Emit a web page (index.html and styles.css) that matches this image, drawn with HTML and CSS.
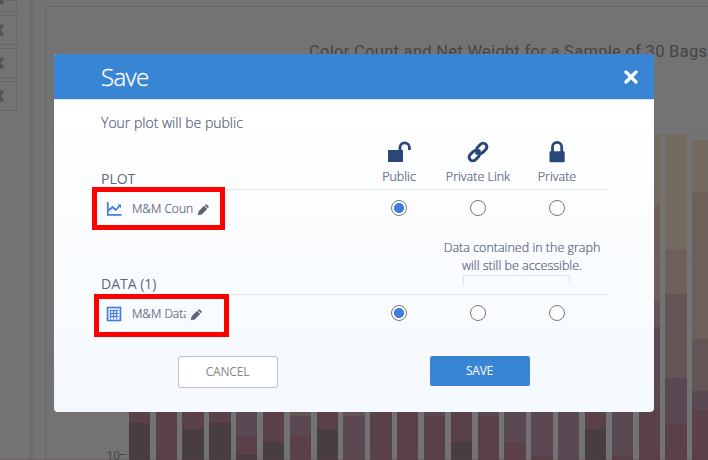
FILE: index.html
```html
<!DOCTYPE html>
<html lang="en">
<head>
<meta charset="utf-8">
<title>Save</title>
<link rel="stylesheet" href="styles.css">
</head>
<body>
<div class="workspace">
  <aside class="rail">
    <div class="rail-item"><svg viewBox="0 0 12 12"><path d="M1 1l10 10m0-10l-10 10"/></svg></div>
    <div class="rail-item"><svg viewBox="0 0 12 12"><path d="M1 1l10 10m0-10l-10 10"/></svg></div>
    <div class="rail-item"><svg viewBox="0 0 12 12"><path d="M1 1l10 10m0-10l-10 10"/></svg></div>
    <div class="rail-item"><svg viewBox="0 0 12 12"><path d="M1 1l10 10m0-10l-10 10"/></svg></div>
  </aside>
  <main class="plot">
    <svg class="chart" viewBox="0 0 708 460" shape-rendering="crispEdges">
      <path class="grid" d="M125 134.500H708M125 198.500H708M125 262.500H708M125 326.500H708M125 390.500H708M125 454.500H708"/>
      <g class="maroon">
        <path d="M129 400h21v60h-21zM156 400h21v60h-21zM182 400h22v60h-22zM209 400h22v60h-22zM236 400h21v60h-21zM263 400h21v60h-21zM290 400h21v60h-21zM370 400h22v60h-22zM397 400h21v60h-21zM424 400h21v60h-21zM451 400h21v60h-21zM317 400h21v60h-21zM478 400h21v60h-21zM504 400h22v60h-22zM531 400h22v60h-22zM585 400h21v60h-21zM612 400h21v60h-21zM639 410h21v50h-21zM665 423h22v37h-22zM692 410h16v50h-16z"/>
      </g>
      <path class="dark" d="M129 423h21v37h-21zM182 429h22v31h-22zM209 423h22v37h-22zM236 455h21v5h-21zM263 442h21v18h-21zM317 429h21v31h-21zM451 442h21v18h-21zM585 429h21v31h-21z"/>
      <path class="purple" d="M236 400h21v36h-21zM290 416h21v20h-21zM343 416h22v44h-22zM424 400h21v16h-21zM478 400h21v16h-21zM504 400h22v42h-22zM531 400h22v55h-22zM558 400h21v60h-21zM612 400h21v55h-21zM639 327h21v83h-21zM665 378h22v45h-22zM692 391h16v19h-16z"/>
      <path class="brown" d="M290 400h21v16h-21zM343 400h22v16h-22zM639 301h21v26h-21zM665 294h22v84h-22zM692 339h16v52h-16z"/>
      <path class="clay" d="M639 205h21v96h-21zM665 250h22v44h-22zM692 192h16v147h-16z"/>
      <path class="tan" d="M639 134h21v71h-21zM665 134h22v116h-22zM692 140h16v52h-16z"/>
      <path class="tick" d="M120 454.500h5"/>
      <path class="edge" d="M0 459.500H708"/>
      <text class="axis" x="106.500" y="460">10</text>
      <text class="title" x="309" y="57" textLength="398">Color Count and Net Weight for a Sample of 30 Bags</text>
    </svg>
  </main>
</div>

<section class="modal" role="dialog">
  <header class="modal-head">
    <h1>Save</h1>
    <svg class="close" viewBox="0 0 14 14"><path d="M2 2l10 10M12 2L2 12"/></svg>
  </header>
  <div class="modal-body">
    <p class="intro"><span>Your plot will be public</span></p>
    <div class="row heading">
      <h2><span>PLOT</span></h2>
      <div class="option">
        <svg class="icon" viewBox="0 0 24 22"><path class="fill" d="M1 9h15v12H1z"/><path class="shackle" d="M13 9V6.500a4.700 4.700 0 0 1 9.400 0V9"/></svg>
        <span>Public</span>
      </div>
      <div class="option">
        <svg class="icon" viewBox="0 0 24 22"><g class="chain" transform="translate(12 11) rotate(-45)"><rect x="-11" y="-3.700" width="11.600" height="7.400" rx="3.700"/><rect x="-.6" y="-3.700" width="11.600" height="7.400" rx="3.700"/><path d="M-3 0h6"/></g></svg>
        <span>Private Link</span>
      </div>
      <div class="option">
        <svg class="icon" viewBox="0 0 24 22"><rect class="fill" x="4.500" y="10.300" width="15.200" height="11" rx="1"/><path class="shackle" d="M7.500 11V6a4.600 4.600 0 0 1 9.200 0v5"/></svg>
        <span>Private</span>
      </div>
    </div>
    <div class="row choices">
      <div class="file">
        <svg class="kind" viewBox="0 0 16 16"><path class="line" d="M1.800 1v12.800H15.500"/><path class="line" d="M2.500 9.500L6.500 6l3.300 3L14 4.300"/><path class="tip" d="M11.300 3.500H15v3.700z"/></svg>
        <span class="name">M&amp;M Coun</span>
        <svg class="pencil" viewBox="0 0 12 12"><path d="M.8 11.200l.8-3.900L7.100 1.800l3.100 3.100-5.500 5.500zM7.700 1.200l.9-.7q.6-.4 1.100 0l1.800 1.800q.5.600 0 1.200l-.8.800z"/></svg>
      </div>
      <i class="radio on"></i><i class="radio"></i><i class="radio"></i>
    </div>
    <div class="row data-heading">
      <h2><span>DATA (1)</span></h2>
      <div class="note">
        <span>Data contained in the graph</span>
        <span>will still be accessible.</span>
        <div class="bracket"></div>
      </div>
    </div>
    <div class="row choices">
      <div class="file">
        <svg class="kind" viewBox="0 0 16 16"><rect class="sheet" x="1.500" y="1.500" width="13" height="13"/><path class="cells" d="M4 4.500h8.500M4 7.500h8.500M4 10.500h8.500M4.500 4v8.500M7.500 4v8.500M10.500 4v8.500"/></svg>
        <span class="name short">M&amp;M Data</span>
        <svg class="pencil" viewBox="0 0 12 12"><path d="M.8 11.200l.8-3.900L7.100 1.800l3.100 3.100-5.500 5.500zM7.700 1.200l.9-.7q.6-.4 1.100 0l1.800 1.800q.5.600 0 1.200l-.8.800z"/></svg>
      </div>
      <i class="radio on"></i><i class="radio"></i><i class="radio"></i>
    </div>
    <footer class="actions">
      <button class="cancel">CANCEL</button>
      <button class="save">SAVE</button>
    </footer>
  </div>
  <div class="mark mark-plot"></div>
  <div class="mark mark-data"></div>
</section>
</body>
</html>
```
FILE: styles.css
```css
* { box-sizing: border-box; }
body {
  margin: 0;
  width: 708px;
  height: 460px;
  overflow: hidden;
  position: relative;
  background: #737373;
  color: #69738a;
  font-family: "Open Sans", "Noto Sans", sans-serif;
}
h1, h2, p { margin: 0; font-weight: 400; }
span { white-space: nowrap; }

.workspace { display: flex; height: 460px; }
.rail {
  width: 33px;
  flex: none;
  display: flex;
  flex-direction: column;
  gap: 3px;
  border-right: 4px solid #6d6d6d;
}
.rail-item {
  width: 17px;
  height: 30px;
  flex: none;
  border: 1px solid #66676d;
  border-left: 0;
  display: flex;
  align-items: center;
}
.rail-item:first-child { height: 12px; align-items: flex-start; }
.rail-item:first-child svg { margin-top: -8px; }
.rail-item svg { width: 12px; height: 12px; margin-left: -8px; flex: none; stroke: #505259; stroke-width: 3.400; overflow: visible; }
.plot {
  flex: 1;
  margin: 6px 0 0 12px;
  border: 1px solid #666;
  border-width: 1px 0 0 1px;
}
.chart { display: block; width: 708px; height: 460px; margin: -7px 0 0 -46px; }
.grid { stroke: #6c6c6c; }
.maroon { fill: #5a4049; }
.dark { fill: #483e3f; }
.purple { fill: #5a4952; }
.brown { fill: #645456; }
.clay { fill: #6e5f5b; }
.tan { fill: #726a5e; }
.tick { stroke: #444; }
.edge { stroke: #603c43; stroke-opacity: .25; }
.axis { font: 12px Roboto, sans-serif; fill: #43474f; }
.title { font: 400 16.500px Roboto, sans-serif; fill: #454545; }

.modal {
  position: absolute;
  left: 54px;
  top: 54px;
  width: 600px;
  height: 358px;
  border-radius: 4px;
  background: linear-gradient(#fff 45px, #f4f9fe);
}
.modal-head {
  height: 46px;
  padding: 0 16px 0 47px;
  display: flex;
  align-items: center;
  justify-content: space-between;
  background: #3885d3;
  border-bottom: 1px solid #dfe7f3;
  border-radius: 4px 4px 0 0;
}
h1 { font-size: 24px; font-weight: 300; line-height: 44px; color: #fff; letter-spacing: -.6px; -webkit-text-stroke: .3px; }
.close { width: 14px; height: 14px; stroke: #fff; stroke-width: 3.200; stroke-linecap: round; }
.modal-body { padding: 0 47px; }
.intro { font-size: 14px; font-weight: 300; line-height: 20px; padding-top: 13px; height: 39px; color: #566178; }
.intro, .option span, .name, .note span { -webkit-text-stroke: .2px; }

.row { display: grid; grid-template-columns: 258px 79px 79px 79px; justify-content: start; }
.row.heading { height: 51px; border-bottom: 1px solid #e2e5eb; grid-template-rows: 50px; }
h2 { align-self: end; font-size: 14px; line-height: 20px; color: #5d687e; }
.option { display: flex; flex-direction: column; align-items: center; font-size: 12.500px; font-weight: 300; line-height: 16px; color: #566178; }
.option span { margin-left: 1px; }
.icon { width: 24px; height: 22px; margin: 2px 0 6px; }
.fill { fill: #294779; }
.shackle { fill: none; stroke: #294779; stroke-width: 2.800; }
.chain { fill: none; stroke: #294779; stroke-width: 3; }

.choices { height: 36px; margin-bottom: 1px; align-items: center; justify-items: center; }
.file { justify-self: start; display: flex; align-items: center; padding: 1px 0 0 5px; }
.kind { width: 16px; height: 16px; margin-right: 10px; }
.line { fill: none; stroke: #447bdc; stroke-width: 1.700; }
.tip { fill: #447bdc; }
.sheet { fill: #dce7fb; stroke: #447bdc; stroke-width: 1.600; }
.cells { fill: none; stroke: #447bdc; stroke-width: 1; }
.name { width: 61px; overflow: hidden; font-size: 12px; font-weight: 300; line-height: 18px; color: #566178; }
.name.short { width: 54px; }
.pencil { width: 12px; height: 12px; margin: 2px 0 0 4px; fill: #5d6679; }
.radio { width: 16px; height: 16px; border: 1px solid #777; border-radius: 50%; background: #fff; }
.radio.on { background: radial-gradient(circle, #447bdf 4.700px, #fff 5.400px); }

.data-heading { height: 68px; border-bottom: 1px solid #e2e5eb; }
.note {
  grid-column: 3 / 5;
  width: 168px;
  display: flex;
  flex-direction: column;
  align-items: center;
  padding-top: 12px;
  font-size: 12.500px;
  font-weight: 300;
  line-height: 18px;
  color: #566178;
}
.bracket { flex: none; width: 107px; height: 10px; margin-top: 0; margin-right: 11px; border: 1px solid #e2e5eb; border-bottom: 0; }
.actions { display: flex; padding: 24px 0 0 77px; align-items: flex-start; }
button { width: 100px; padding: 0 1px 2px 0; border-radius: 2px; font: 12px "Open Sans", sans-serif; letter-spacing: -.2px; }
.cancel { height: 32px; border: 1px solid #bfc0d1; background: #fff; color: #868686; }
.save { height: 30px; margin-left: 152px; border: 0; background: #3885d3; color: #fff; }
.mark { position: absolute; border: 5px solid #f00; height: 43px; }
.mark-plot { left: 38px; top: 133px; width: 133px; }
.mark-data { left: 40px; top: 240px; width: 135px; }
```
